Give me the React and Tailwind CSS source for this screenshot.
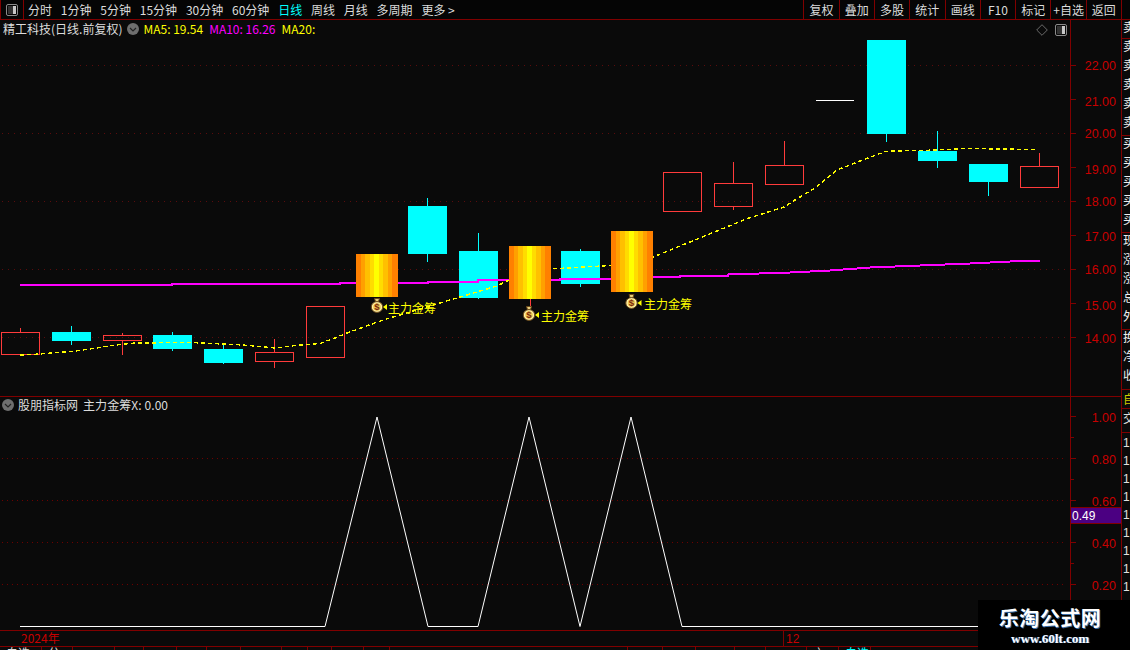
import React from "react";

const RED = "#ff3b3b";
const CY = "#00ffff";
const candles = [
  ["r", 1, 332, 355, 20.5, 328, 355],
  ["c", 52, 332, 341, 71.5, 326, 345],
  ["r", 103, 335, 341, 122.5, 333, 355],
  ["c", 153, 335, 349, 172.5, 332, 351],
  ["c", 204, 349, 363, 223.5, 344, 364],
  ["r", 255, 352, 362, 274.5, 339, 368],
  ["r", 306, 306, 358, 325, 306, 358],
  ["c", 408, 206, 254, 427.5, 198, 262],
  ["c", 459, 251, 298, 478.5, 233, 299],
  ["c", 561, 251, 284, 580.5, 249, 287],
  ["r", 663, 172, 212, 682, 172, 212],
  ["r", 714, 183, 207, 733.5, 162, 210],
  ["r", 765, 165, 185, 784.5, 141, 165],
  ["c", 867, 40, 134, 886.5, 134, 142],
  ["c", 918, 151, 161, 937.5, 131, 168],
  ["c", 969, 164, 182, 988.5, 182, 196],
  ["r", 1020, 166, 188, 1039.5, 153, 166],
];
const golds = [
  [356, 254, 297],
  [509, 246, 299],
  [611, 231, 292],
];
const stripes = ["#ff8000", "#ffa000", "#ffc000", "#ffdc00", "#ffff00", "#ffdc00", "#ffc000", "#ffa000", "#ff8000"];
const ma20 = "20,284.5 172,284.5 172,283.5 340,283.5 340,282.5 428,282.5 428,281.5 478,281.5 478,279.5 560,279.5 560,278.5 652,278.5 652,276.5 680,276.5 680,275.5 728,275.5 728,274.5 790,272.5 830,270.5 870,267.5 920,265.5 970,263.5 1010,261.5 1040,260.5";
const ma5 = "20,355 40,354 76,351 120,344.5 135,343 190,342.5 243,345 275,348 300,345 320,343.5 335,338 347,333 383,320 440,303 497,286 507,281 550,269 610,265.5 653,257 700,238 746,219 784,207 795,200 815,188 837,170 860,161 886,151.3 937,150 963,148.5 1000,149 1037,149.5";
const lower = "20,626.5 325,626.5 377,417 428,626.5 478,626.5 529,417 580,626.5 631,417 682,626.5 980,626.5";

function Bag({ x, y }) {
  return (
    <g transform={`translate(${x} ${y})`}>
      <path d="M3.5 .5h5L7.5 3.5h-3z" fill="#e8cf80" stroke="#6b4a18" strokeWidth="1" />
      <ellipse cx="6" cy="9" rx="5.7" ry="5.4" fill="#fff0a8" stroke="#6b4a18" strokeWidth="1" />
      <ellipse cx="6" cy="9" rx="3.8" ry="3.8" fill="#f0c850" />
      <text x="6" y="12.3" textAnchor="middle" fontSize="9.5" fontWeight="700" fill="#7a2a10" fontFamily="Liberation Sans, sans-serif">$</text>
    </g>
  );
}

function Marker({ x, y, tx, base }) {
  return (
    <g>
      <Bag x={x} y={y} />
      <path d={`M${x + 12} ${y + 9}l4 -3v6z`} fill="#ffff00" />
      <text x={tx} y={base} fontSize="12" fill="#ffff00" fontFamily="'Noto Sans CJK SC', sans-serif">主力金筹</text>
    </g>
  );
}

function Dotted({ y, x2 = 1066, color, dash = "1 5" }) {
  return <line x1="2" x2={x2} y1={y} y2={y} stroke={color} strokeWidth="1" strokeDasharray={dash} shapeRendering="crispEdges" />;
}

function MainChart() {
  return (
    <svg viewBox="0 20 1070 376" className="block w-[1070px] h-[376px]">
      {[65.5, 133.5, 201.5, 269.5, 337.5].map((y) => (
        <Dotted key={y} y={y} color="#5a0c0c" />
      ))}
      {candles.map(([k, x, t, b, wx, wt, wb], i) =>
        k === "r" ? (
          <g key={i} shapeRendering="crispEdges">
            {wt < t && <line x1={wx} x2={wx} y1={wt} y2={t} stroke={RED} />}
            {wb > b && <line x1={wx} x2={wx} y1={b} y2={wb} stroke={RED} />}
            <rect x={x + 0.5} y={t + 0.5} width={38} height={b - t - 1} fill="none" stroke={RED} />
          </g>
        ) : (
          <g key={i} shapeRendering="crispEdges">
            <line x1={wx} x2={wx} y1={wt} y2={wb} stroke={CY} />
            <rect x={x} y={t} width={39} height={b - t} fill={CY} />
          </g>
        )
      )}
      <line x1="530.5" x2="530.5" y1="299" y2="306" stroke={RED} shapeRendering="crispEdges" />
      <line x1="816" x2="854" y1="100.5" y2="100.5" stroke="#fff" shapeRendering="crispEdges" />
      <polyline points={ma20} fill="none" stroke="#ff00ff" strokeWidth="2" shapeRendering="crispEdges" />
      <polyline points={ma5} fill="none" stroke="#ffff00" strokeWidth="1.4" strokeDasharray="4 3" shapeRendering="crispEdges" />
      {golds.map(([x, t, b]) => (
        <g key={x} shapeRendering="crispEdges">
          {stripes.map((c, i) => (
            <rect key={i} x={x + (i * 41) / 9} y={t} width={41 / 9 + 0.5} height={b - t} fill={c} />
          ))}
        </g>
      ))}
      <Marker x={371} y={298} tx={388} base={313} />
      <Marker x={523} y={306} tx={541} base={321} />
      <Marker x={625.5} y={294} tx={644} base={309} />
    </svg>
  );
}

function SubChart() {
  return (
    <svg viewBox="0 397 1070 233" className="block w-[1070px] h-[233px]">
      {[458.5, 500.5, 542.5, 584.5].map((y) => (
        <Dotted key={y} y={y} color="#6e0000" dash="1 4" />
      ))}
      <polyline points={lower} fill="none" stroke="#ffffff" strokeWidth="1" />
    </svg>
  );
}

function Axis({ y0, h, major, minor }) {
  return (
    <svg viewBox={`0 ${y0} 50 ${h}`} className="block w-[50px]" style={{ height: h }}>
      {major.map(([y, t, off = 0]) => (
        <g key={t}>
          <line x1="0" x2="5" y1={y} y2={y} stroke="#800000" shapeRendering="crispEdges" />
          <text x="45" y={y + 4 + off} textAnchor="end" fontSize="12.5" fill="#c80000" fontFamily="'Liberation Sans', sans-serif">{t}</text>
        </g>
      ))}
      {minor.map((y) => (
        <line key={y} x1="0" x2="3" y1={y} y2={y} stroke="#800000" shapeRendering="crispEdges" />
      ))}
    </svg>
  );
}

function Chevron() {
  return (
    <span className="flex h-[12px] w-[12px] shrink-0 items-center justify-center rounded-full bg-[#6e6e6e]">
      <svg width="8" height="5" viewBox="0 0 8 5">
        <path d="M1 1l3 3 3-3" fill="none" stroke="#222" strokeWidth="1.2" />
      </svg>
    </span>
  );
}

function PanelIcon() {
  return (
    <svg width="12" height="12" viewBox="0 0 12 12" className="block">
      <rect x="0.5" y="0.5" width="11" height="11" rx="1.5" fill="none" stroke="#8a8a8a" />
      <rect x="2" y="2" width="5" height="8" fill="#333" />
      <rect x="7" y="2" width="3" height="8" fill="#c8c8c8" />
    </svg>
  );
}

const leftTabs = [
  ["分时", 0],
  ["1分钟", 0],
  ["5分钟", 0],
  ["15分钟", 0],
  ["30分钟", 0],
  ["60分钟", 0],
  ["日线", 1],
  ["周线", 0],
  ["月线", 0],
  ["多周期", 0],
  ["更多 >", 0],
];
const rightBtns = ["复权", "叠加", "多股", "统计", "画线", "F10", "标记", "+自选", "返回"];
const stripRows = [
  { h: 19, items: ["卖"] },
  { h: 97, items: ["卖", "卖", "卖", "卖", "卖"] },
  { h: 97, items: ["买", "买", "买", "买", "买"] },
  { h: 97, items: ["现", "涨", "涨", "总", "外"] },
  { h: 60, items: ["换", "净", "收"] },
];
const bottomCells = [
  [42, "自选"],
  [31, "分"],
  [42, ""],
  [29, ""],
  [33, ""],
  [30, ""],
  [34, ""],
  [41, ""],
  [26, ""],
  [24, ""],
  [32, ""],
  [26, ""],
  [238, ""],
  [35, ""],
  [33, ""],
  [39, ""],
  [31, ""],
  [41, ""],
  [32, "亠"],
  [32, "自选"],
];

export default function App() {
  return (
    <div className="relative flex h-[650px] w-[1130px] flex-col overflow-hidden bg-[#0a0a0a] font-['Noto_Sans_CJK_SC',sans-serif] text-[12px] leading-none text-[#dcdcdc]">
      {/* toolbar */}
      <div className="flex h-[20px] shrink-0 items-center border-b border-[#800000] bg-[#050505]">
        <div className="flex h-full w-[24px] items-center justify-center border-x border-[#800000]">
          <PanelIcon />
        </div>
        <div className="ml-[4px] flex flex-1 gap-[8.8px]">
          {leftTabs.map(([t, a]) => (
            <span key={t} className={a ? "text-[#00ffff]" : ""}>{t}</span>
          ))}
        </div>
        <div className="flex h-full">
          {rightBtns.map((b) => (
            <span key={b} className="flex h-full w-[35.3px] items-center justify-center whitespace-nowrap border-l border-[#800000]">{b}</span>
          ))}
          <span className="h-full w-[9px] border-l border-[#800000]" />
        </div>
      </div>

      {/* body */}
      <div className="flex min-h-0 flex-1">
        <div className="flex w-[1121px] flex-col">
          <div className="relative box-content flex h-[376px] border-b border-[#800000]">
            <div className="w-[1070px]">
              <MainChart />
            </div>
            <div className="border-l border-[#800000]">
              <Axis
                y0={20}
                h={376}
                major={[[65.5, "22.00"], [99.5, "21.00", 2], [133.5, "20.00"], [167.5, "19.00", 2], [201.5, "18.00"], [235.5, "17.00", 1], [269.5, "16.00"], [303.5, "15.00", 2], [337.5, "14.00", 1]]}
                minor={[]}
              />
            </div>
            <div className="absolute left-[3px] top-[3px] flex items-center whitespace-nowrap">
              <span>精工科技(日线.前复权)</span>
              <span className="ml-[5px]"><Chevron /></span>
              <span className="ml-[4px] text-[#ffff00]">MA5: 19.54</span>
              <span className="ml-[6px] text-[#ff00ff]">MA10: 16.26</span>
              <span className="ml-[6px] text-[#ffff00]">MA20:</span>
            </div>
            <div className="absolute left-[1036px] top-[4px] flex items-center gap-[7px]">
              <svg width="12" height="12" viewBox="0 0 12 12" className="block">
                <path d="M6 .7L11.3 6 6 11.3.7 6z" fill="none" stroke="#6a6a6a" />
              </svg>
              <PanelIcon />
            </div>
          </div>
          <div className="relative flex h-[233px] shrink-0">
            <div className="w-[1070px]">
              <SubChart />
            </div>
            <div className="relative border-l border-[#800000]">
              <Axis
                y0={397}
                h={233}
                major={[[416.5, "1.00", 1], [458.5, "0.80", 1], [500.5, "0.60", 1], [542.5, "0.40", 1], [584.5, "0.20", 1]]}
                minor={[437.5, 479.5, 521.5, 563.5, 605.5]}
              />
              <div className="absolute left-0 top-[110px] flex h-[17px] w-[50px] items-center border-y border-[#800000] bg-[#4b0082] pl-[1px] font-['Liberation_Sans',sans-serif] text-[12px] text-white">0.49</div>
            </div>
            <div className="absolute left-[2px] top-[2px] flex items-center whitespace-nowrap">
              <Chevron />
              <span className="ml-[4px]">股朋指标网</span>
              <span className="ml-[5px] tracking-[0.08px]">主力金筹X: 0.00</span>
            </div>
          </div>
        </div>
        {/* clipped side strip */}
        <div className="flex-1 overflow-hidden border-l border-[#800000]">
          {stripRows.map((r, i) => (
            <div key={i} className="flex flex-col gap-[6.5px] overflow-hidden border-b border-[#800000] pl-[1px] pt-[1px] text-[12.5px] text-[#eeeeee]" style={{ height: r.h }}>
              {r.items.map((c, j) => (
                <span key={j} className="block">{c}</span>
              ))}
            </div>
          ))}
          <div className="h-[19px] border-b border-[#800000] pl-[1px] pt-[3px] text-[#cccc00]">自</div>
          <div className="h-[24px] border-b border-[#800000] pl-[1px] pt-[3px]">交</div>
          <div className="flex flex-col gap-[6px] pl-[1px] pt-[4px] font-['Liberation_Sans',sans-serif] text-[#e0e0e0]">
            {[0, 1, 2, 3, 4, 5, 6, 7, 8].map((i) => (
              <span key={i}>1</span>
            ))}
          </div>
        </div>
      </div>

      {/* time axis */}
      <div className="relative h-[17px] shrink-0 border-y border-[#800000] font-['Liberation_Sans',sans-serif] text-[#c80000]">
        <span className="absolute left-[21px] top-[1px] font-['Noto_Sans_CJK_SC',sans-serif]">2024年</span>
        <span className="absolute left-[783px] top-0 flex h-full items-center border-l border-[#800000] pl-[2px]">12</span>
      </div>

      {/* bottom tabs, mostly cut off */}
      <div className="flex h-[3px] shrink-0 overflow-hidden">
        {bottomCells.map(([w, t], i) => (
          <span key={i} className={`h-[3px] overflow-hidden whitespace-nowrap border-r border-[#800000] pl-[6px] ${i === 19 ? "text-[#00ffff]" : ""}`} style={{ width: w }}>
            {t}
          </span>
        ))}
      </div>

      {/* watermark */}
      <div className="absolute bottom-0 right-0 flex h-[50px] w-[152px] flex-col items-center bg-black pr-[8px] pt-[8px]">
        <span className="text-[20px] font-bold tracking-[0.5px] text-white [text-shadow:1px_1px_0_#3b6ea8]">乐淘公式网</span>
        <span className="mt-[4px] font-['Liberation_Serif',serif] text-[13px] font-bold text-white [text-shadow:1px_0_0_#3b6ea8]">www.60lt.com</span>
      </div>
    </div>
  );
}
